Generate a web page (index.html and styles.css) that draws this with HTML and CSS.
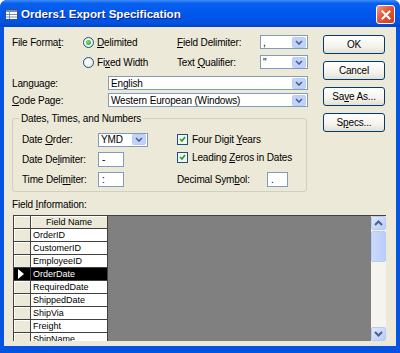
FILE: index.html
```html
<!DOCTYPE html>
<html lang="en">
<head>
  <meta charset="UTF-8" />
  <title>Orders1 Export Specification</title>
  <link rel="stylesheet" href="styles.css">
</head>
<body>
  <div class="window">
    <div class="titlebar">
      <svg class="app-icon" width="13" height="11" viewBox="0 0 13 11">
        <rect x="0.5" y="0.5" width="12" height="10" fill="#fff" stroke="#3a4f7a"/>
        <rect x="1" y="1" width="11" height="2" fill="#6c8cc9"/>
        <line x1="1" y1="5.5" x2="12" y2="5.5" stroke="#7a8fb8"/>
        <line x1="1" y1="8" x2="12" y2="8" stroke="#7a8fb8"/>
        <line x1="4.5" y1="3" x2="4.5" y2="10" stroke="#7a8fb8"/>
      </svg>
      <span class="title">Orders1 Export Specification</span>
      <div class="close-btn">
        <svg width="10" height="10" viewBox="0 0 10 10">
          <path d="M1.5 1.5 L8.5 8.5 M8.5 1.5 L1.5 8.5" stroke="#fff" stroke-width="2" stroke-linecap="square"/>
        </svg>
      </div>
    </div>

    <div class="dialog">
      <div class="top">
        <div class="main">
          <div class="row">
            <span class="lbl lbl-format">File Forma<u>t</u>:</span>
            <span class="radio-item"><span class="radio checked"></span><span><u>D</u>elimited</span></span>
            <span class="lbl lbl-delim"><u>F</u>ield Delimiter:</span>
            <div class="combo combo-small"><span class="combo-text">,</span><span class="drop"></span></div>
          </div>
          <div class="row row-2">
            <span class="lbl lbl-format"></span>
            <span class="radio-item"><span class="radio"></span><span>Fi<u>x</u>ed Width</span></span>
            <span class="lbl lbl-delim">Text <u>Q</u>ualifier:</span>
            <div class="combo combo-small"><span class="combo-text">"</span><span class="drop"></span></div>
          </div>
          <div class="row row-3">
            <span class="lbl lbl-wide">Language:</span>
            <div class="combo combo-wide"><span class="combo-text">English</span><span class="drop"></span></div>
          </div>
          <div class="row row-4">
            <span class="lbl lbl-wide"><u>C</u>ode Page:</span>
            <div class="combo combo-wide"><span class="combo-text">Western European (Windows)</span><span class="drop"></span></div>
          </div>

          <fieldset class="group">
            <legend>Dates, Times, and Numbers</legend>
            <div class="grow">
              <div class="gleft">
                <span class="lbl lbl-group">Date <u>O</u>rder:</span>
                <div class="combo combo-order"><span class="combo-text">YMD</span><span class="drop"></span></div>
              </div>
              <span class="check-item"><span class="check"></span><span>Four Digit <u>Y</u>ears</span></span>
            </div>
            <div class="grow grow-gap">
              <div class="gleft">
                <span class="lbl lbl-group">Date De<u>l</u>imiter:</span>
                <div class="textbox tb-delim">-</div>
              </div>
              <span class="check-item check-up"><span class="check"></span><span>Leading <u>Z</u>eros in Dates</span></span>
            </div>
            <div class="grow grow-gap">
              <div class="gleft">
                <span class="lbl lbl-group">Time Deli<u>m</u>iter:</span>
                <div class="textbox tb-delim">:</div>
              </div>
              <span class="lbl lbl-decimal">Decimal Sym<u>b</u>ol:</span>
              <div class="textbox tb-decimal">.</div>
            </div>
          </fieldset>
        </div>

        <div class="buttons">
          <div class="btn">OK</div>
          <div class="btn">Cancel</div>
          <div class="btn"><span>Sa<u>v</u>e As...</span></div>
          <div class="btn"><span>S<u>p</u>ecs...</span></div>
        </div>
      </div>

      <div class="field-info">Field <u>I</u>nformation:</div>

      <div class="datasheet">
        <div class="sheet-cols">
          <div class="sheet-row header"><div class="sel"></div><div class="cell">Field Name</div></div>
          <div class="sheet-row"><div class="sel"></div><div class="cell">OrderID</div></div>
          <div class="sheet-row"><div class="sel"></div><div class="cell">CustomerID</div></div>
          <div class="sheet-row"><div class="sel"></div><div class="cell">EmployeeID</div></div>
          <div class="sheet-row current"><div class="sel"><span class="pointer"></span></div><div class="cell">OrderDate</div></div>
          <div class="sheet-row"><div class="sel"></div><div class="cell">RequiredDate</div></div>
          <div class="sheet-row"><div class="sel"></div><div class="cell">ShippedDate</div></div>
          <div class="sheet-row"><div class="sel"></div><div class="cell">ShipVia</div></div>
          <div class="sheet-row"><div class="sel"></div><div class="cell">Freight</div></div>
          <div class="sheet-row"><div class="sel"></div><div class="cell">ShipName</div></div>
        </div>
        <div class="sheet-empty"></div>
        <div class="scrollbar">
          <div class="sb-btn"><svg width="9" height="6" viewBox="0 0 9 6"><path d="M1 5 L4.5 1.5 L8 5" fill="none" stroke="#4d6185" stroke-width="2"/></svg></div>
          <div class="sb-thumb"></div>
          <div class="sb-track"></div>
          <div class="sb-btn"><svg width="9" height="6" viewBox="0 0 9 6"><path d="M1 1 L4.5 4.5 L8 1" fill="none" stroke="#4d6185" stroke-width="2"/></svg></div>
        </div>
      </div>
    </div>
  </div>
</body>
</html>
```

FILE: styles.css
```css
body { margin: 0; font-family: "Liberation Sans", Arial, sans-serif; font-size: 10px; letter-spacing: -0.15px; color: #000; background: #fff; }
u { text-decoration: underline; }

.window {
  width: 400px; height: 353px; box-sizing: border-box;
  background: #0553e1; border-radius: 7px 7px 0 0;
  display: flex; flex-direction: column;
}
.titlebar {
  height: 27px; display: flex; align-items: center; padding: 0 5px 0 5px;
  border-radius: 7px 7px 0 0;
  background: linear-gradient(#3d8ffc 0%, #0a60ec 12%, #0058ee 45%, #0052e0 85%, #0243c6 100%);
}
.app-icon { margin-right: 3px; margin-top: 1px; }
.title {
  color: #fff; font-weight: bold; font-size: 11.6px; letter-spacing: 0;
  text-shadow: 1px 1px 0 #0a1e84;
}
.close-btn {
  margin-left: auto; width: 17px; height: 17px; margin-top: 2px;
  border: 1px solid #fff; border-radius: 3px;
  background: linear-gradient(135deg, #f39a7f 0%, #e2573a 45%, #c8401f 100%);
  display: flex; align-items: center; justify-content: center;
}

.dialog {
  flex: 1; margin: 0 4px 7px 4px; background: #ece9d8;
  padding: 8px 0 0 8px; box-sizing: border-box;
}
.top { display: flex; gap: 15px; }
.main { width: 296px; }

.row { display: flex; align-items: center; height: 14px; }
.row-2 { margin-top: 6px; }
.row-3 { margin-top: 7px; }
.row-4 { margin-top: 3px; }
.lbl { white-space: nowrap; }
.lbl-format { width: 71px; }
.lbl-delim { width: 83px; }
.lbl-wide { width: 96px; }
.radio-item { width: 94px; display: flex; align-items: center; white-space: nowrap; }
.radio {
  width: 11px; height: 11px; box-sizing: border-box; border-radius: 50%;
  border: 1px solid #1c5180; margin-right: 3px;
  background: radial-gradient(circle at 40% 40%, #fff 0%, #e4e3dc 100%);
  display: flex; align-items: center; justify-content: center;
}
.radio.checked::after {
  content: ""; width: 5px; height: 5px; border-radius: 50%;
  background: radial-gradient(circle at 40% 40%, #6fe07a, #21a121);
}

.combo {
  height: 14px; box-sizing: border-box; border: 1px solid #7f9db9; background: #fff;
  display: flex; align-items: center; padding: 0 1px 0 2px;
}
.combo-text { flex: 1; white-space: nowrap; overflow: hidden; }
.drop {
  width: 14px; height: 11px; border-radius: 2px;
  background: #c1d3fb url("data:image/svg+xml,%3Csvg xmlns='http://www.w3.org/2000/svg' width='8' height='5'%3E%3Cpath d='M1 1 L4 4 L7 1' fill='none' stroke='%234d6185' stroke-width='1.6'/%3E%3C/svg%3E") no-repeat center;
  box-shadow: inset 0 0 0 1px #b7cdf6;
}
.combo-small { width: 48px; }
.combo-wide { width: 200px; }
.combo-order { width: 50px; }

.group {
  margin: 5px 0 0 0; padding: 7px 0 4px 9px; width: 295px; box-sizing: border-box;
  border: 1px solid #d0d0bf; border-radius: 3px; min-width: 0;
}
.group legend { padding: 0 2px; margin-left: -3px; line-height: 13px; }
.grow { display: flex; align-items: center; height: 15px; }
.grow-gap { margin-top: 5px; }
.gleft { width: 155px; display: flex; align-items: center; }
.lbl-group { width: 76px; }
.textbox {
  height: 15px; box-sizing: border-box; border: 1px solid #7f9db9; background: #fff;
  padding-left: 3px; line-height: 13px;
}
.tb-delim { width: 26px; }
.tb-decimal { width: 21px; }
.lbl-decimal { width: 90px; }
.check-item { display: flex; align-items: center; white-space: nowrap; }
.check-up { margin-top: -4px; }
.check {
  width: 11px; height: 11px; box-sizing: border-box; border: 1px solid #1c5180;
  margin-right: 4px;
  background: #f4f4f0 url("data:image/svg+xml,%3Csvg xmlns='http://www.w3.org/2000/svg' width='9' height='9'%3E%3Cpath d='M2 4 L4 6 L7 2' fill='none' stroke='%2321a121' stroke-width='1.6'/%3E%3C/svg%3E") no-repeat center;
}

.buttons { width: 62px; display: flex; flex-direction: column; gap: 7px; }
.btn {
  height: 19px; box-sizing: border-box; border: 1px solid #003c74; border-radius: 3px;
  background: linear-gradient(#ffffff 0%, #f4f3ee 60%, #e3e0d2 100%);
  display: flex; align-items: center; justify-content: center;
}

.field-info { margin-top: 6px; line-height: 13px; }

.datasheet {
  margin: 4px 0 0 1px; width: 373px; height: 126px; display: flex;
  border-top: 1px solid #404040; box-sizing: border-box; overflow: hidden;
}
.sheet-cols { width: 94px; border-left: 1px solid #404040; box-sizing: border-box; font-size: 9px; letter-spacing: 0; }
.sheet-row { display: flex; height: 13px; box-sizing: border-box; border-bottom: 1px solid #404040; }
.sel {
  width: 17px; border-right: 1px solid #404040; background: #ece9d8;
  box-shadow: inset 1px 1px 0 #fff; display: flex; align-items: center; padding-left: 4px; box-sizing: border-box;
}
.cell { flex: 1; background: #fff; padding-left: 2px; line-height: 12px; white-space: nowrap; overflow: hidden; }
.header .cell { background: #ece9d8; text-align: center; padding-left: 0; box-shadow: inset 1px 1px 0 #fff; }
.current .cell { background: #000; color: #fff; }
.current .sel { background: #000; box-shadow: none; }
.pointer {
  width: 0; height: 0; border-top: 5px solid transparent; border-bottom: 5px solid transparent;
  border-left: 6px solid #fff;
}
.sheet-empty { flex: 1; background: #808080; border-left: 1px solid #404040; }
.scrollbar { width: 15px; display: flex; flex-direction: column; background: #f5f4ef; }
.sb-btn {
  height: 14px; box-sizing: border-box; border: 1px solid #b6cbf5; border-radius: 2px;
  background: linear-gradient(135deg, #dde8fe, #bacdf7);
  display: flex; align-items: center; justify-content: center;
}
.sb-thumb {
  height: 31px; box-sizing: border-box; border: 1px solid #b6cbf5; border-radius: 2px;
  background: linear-gradient(90deg, #cbdafc, #b9cdfb);
  margin-top: 1px;
}
.sb-track { flex: 1; }
```
